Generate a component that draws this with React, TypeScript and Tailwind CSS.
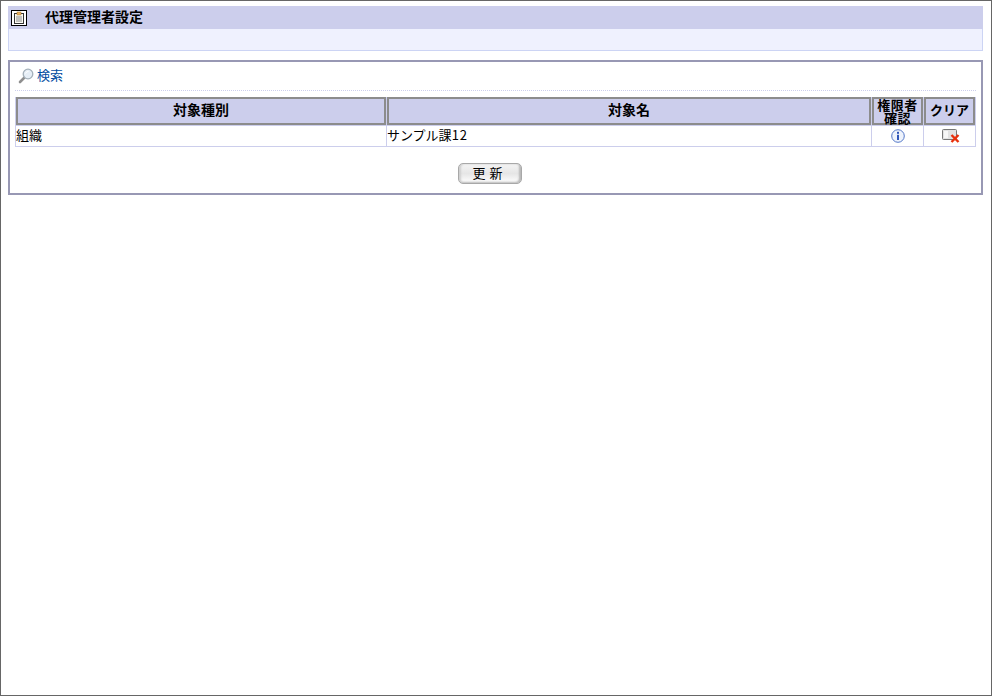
const FONT = "font-['Noto_Sans_CJK_JP',sans-serif]";

function ClipboardIcon() {
  return (
    <svg width="16" height="16" viewBox="0 0 16 16" className="block">
      <rect x="0.5" y="0.5" width="15" height="15" fill="#fff" stroke="#000" />
      <path d="M15.5 1v15M1 15.5h15" stroke="#000" />
      <rect x="3.5" y="3.5" width="9" height="10" fill="#fbfaf2" stroke="#333" />
      <rect x="6" y="2" width="4" height="3" fill="#e8b060" stroke="#a87830" strokeWidth="0.5" />
      <path d="M5 7h6M5 9h6M5 11h6" stroke="#888" />
    </svg>
  );
}

function SearchIcon() {
  return (
    <svg width="16" height="16" viewBox="0 0 16 16" className="block">
      <path d="M6.5 9.5L2 14" stroke="#8f8f8f" strokeWidth="2.6" strokeLinecap="round" />
      <circle cx="10" cy="6" r="4.8" fill="#e6eef6" stroke="#a4b0ba" strokeWidth="1.3" />
      <path d="M7.5 5.5a3 3 0 0 1 3-2" stroke="#fff" fill="none" />
    </svg>
  );
}

function InfoIcon() {
  return (
    <svg width="14" height="14" viewBox="0 0 14 14" className="block">
      <circle cx="7" cy="7" r="6.3" fill="#eef3fc" stroke="#5578c8" />
      <rect x="6" y="2.8" width="2" height="2" fill="#2f55b8" />
      <rect x="6" y="5.8" width="2" height="5.2" fill="#2f55b8" />
    </svg>
  );
}

function ClearIcon() {
  return (
    <svg width="18" height="14" viewBox="0 0 18 14" className="block">
      <rect x="0.5" y="0.5" width="14" height="10" rx="1" fill="#e2e2e2" stroke="#777" />
      <rect x="2" y="2" width="4" height="7" fill="#f6f6f6" />
      <path d="M9.5 6l7 7M16.5 6l-7 7" stroke="#e8300c" strokeWidth="2.4" />
    </svg>
  );
}

const th = "border-x border-[#ccceec] p-0 font-bold text-black";
const thInner = "flex h-[28px] items-center justify-center border-2 border-[#8c8c8c] bg-[#ccceec]";
const td = "border border-[#ccceec] p-0 text-[13px] text-black h-[21px]";
const tdText = "align-top leading-[18px]";

export default function App() {
  return (
    <div className={`${FONT} h-[696px] border border-[#666666] bg-white pl-[7px] pr-[8px] pt-[5px]`}>
      <div className="flex h-[23px] items-center gap-[18px] bg-[#ccceec] pl-[3px]">
        <ClipboardIcon />
        <h1 className="pb-[3px] text-[14px] font-bold leading-none text-black">代理管理者設定</h1>
      </div>
      <div className="h-[22px] border border-t-0 border-[#ccd4f4] bg-[#eff1fe]" />

      <section className="mt-[9px] h-[135px] border-2 border-[#9898b4] pl-[5px] pr-[5px]">
        <div className="flex h-[29px] items-center gap-[3px] border-b border-dotted border-[#ccceec] pl-[3px]">
          <SearchIcon />
          <a className="pb-[3px] text-[13px] leading-none text-[#004ba0]">検索</a>
        </div>
        <table className="mt-[6px] w-[961px] table-fixed border-collapse">
          <colgroup>
            <col className="w-[371px]" />
            <col className="w-[485px]" />
            <col className="w-[52px]" />
            <col className="w-[52px]" />
          </colgroup>
          <thead>
            <tr>
              <th className={th}><div className={`${thInner} pb-[3px] text-[14px]`}>対象種別</div></th>
              <th className={th}><div className={`${thInner} pb-[3px] text-[14px]`}>対象名</div></th>
              <th className={th}><div className={`${thInner} pb-[1px] text-[13px] leading-[13px] tracking-[0.5px]`}><span>権限者<br />確認</span></div></th>
              <th className={th}><div className={`${thInner} pb-[3px] text-[13px]`}>クリア</div></th>
            </tr>
          </thead>
          <tbody>
            <tr>
              <td className={`${td} ${tdText}`}>組織</td>
              <td className={`${td} ${tdText}`}>サンプル課<span className="tracking-[1px]">12</span></td>
              <td className={td}><div className="flex justify-center"><InfoIcon /></div></td>
              <td className={td}><div className="flex justify-center pl-[2px]"><ClearIcon /></div></td>
            </tr>
          </tbody>
        </table>
        <div className="mt-[16px] flex justify-center pr-[12px]">
          <button
            type="button"
            className="h-[21px] w-[64px] rounded-[5px] border border-[#a8a8a8] bg-gradient-to-b from-[#f4f4f4] via-[#e6e6e6] to-[#ffffff] pb-[2px] text-[13px] leading-none tracking-[4px] text-black shadow-[inset_2px_0_2px_#cfcfcf,inset_-2px_-1px_2px_#b8b8b8]"
          >
            更新
          </button>
        </div>
      </section>
    </div>
  );
}
